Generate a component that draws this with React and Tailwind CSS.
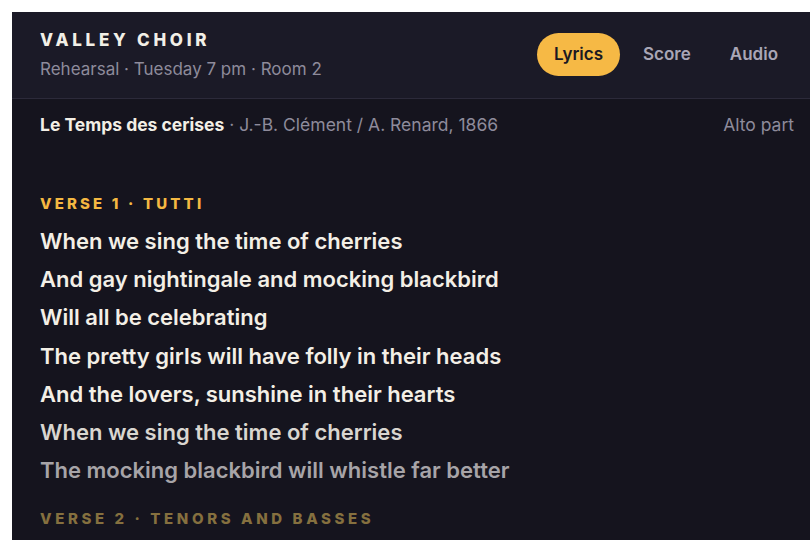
import React from 'react';

const VERSE_ONE = [
  { text: 'When we sing the time of cherries', tone: 'text-[#f3efe6]' },
  { text: 'And gay nightingale and mocking blackbird', tone: 'text-[#f3efe6]' },
  { text: 'Will all be celebrating', tone: 'text-[#f3efe6]' },
  { text: 'The pretty girls will have folly in their heads', tone: 'text-[#f3efe6]' },
  { text: 'And the lovers, sunshine in their hearts', tone: 'text-[#f3efe6]' },
  { text: 'When we sing the time of cherries', tone: 'text-[#d9d6d0]' },
  { text: 'The mocking blackbird will whistle far better', tone: 'text-[#a7a4a8]' },
];

const TABS = ['Lyrics', 'Score', 'Audio'];

export default function App() {
  return (
    <div className="w-[810px] h-[540px] overflow-hidden bg-white pl-3 pt-3 font-['Inter',sans-serif]">
      <div className="w-[810px] h-[560px] bg-[#15141e]">
        {/* Header */}
        <header className="flex items-center justify-between bg-[#1b1a27] px-7 pt-4 pb-[17px] border-b border-[#2c2a3a]">
          <div className="flex flex-col gap-[5px]">
            <h1 className="text-[17px] leading-6 font-extrabold tracking-[0.22em] text-[#f2efe6]">
              VALLEY CHOIR
            </h1>
            <p className="text-[17px] leading-6 text-[#8e8b9b]">
              Rehearsal · Tuesday 7 pm · Room 2
            </p>
          </div>
          <nav className="flex items-center gap-[7px]">
            {TABS.map((tab) =>
              tab === 'Lyrics' ? (
                <button
                  key={tab}
                  className="h-[43px] px-[17px] rounded-full bg-[#f6b945] text-[#1b1822] text-[17px] font-semibold"
                >
                  {tab}
                </button>
              ) : (
                <button key={tab} className="h-[43px] px-4 text-[17px] font-semibold text-[#a9a6b6]">
                  {tab}
                </button>
              )
            )}
          </nav>
        </header>

        {/* Song info */}
        <div className="flex items-center justify-between px-7 pt-[14px] pb-3 text-[17.5px] leading-6">
          <p className="text-[#8e8b9b]">
            <span className="font-bold text-[#f3efe6]">Le Temps des cerises</span> · J.-B. Clément / A. Renard, 1866
          </p>
          <span className="text-[#8e8b9b]">Alto part</span>
        </div>

        {/* Lyrics */}
        <section className="px-7 pt-[45px]">
          <div className="mb-[20px]">
            <h2 className="text-[15px] leading-5 font-extrabold tracking-[0.21em] text-[#f4b842] mb-[8px]">
              VERSE 1 · TUTTI
            </h2>
            <div className="flex flex-col">
              {VERSE_ONE.map((line, i) => (
                <p key={i} className={`text-[22px] leading-[38.2px] font-semibold ${line.tone}`}>
                  {line.text}
                </p>
              ))}
            </div>
          </div>
          <h2 className="text-[15px] leading-5 font-extrabold tracking-[0.24em] text-[#85703f]">
            VERSE 2 · TENORS AND BASSES
          </h2>
        </section>
      </div>
    </div>
  );
}
